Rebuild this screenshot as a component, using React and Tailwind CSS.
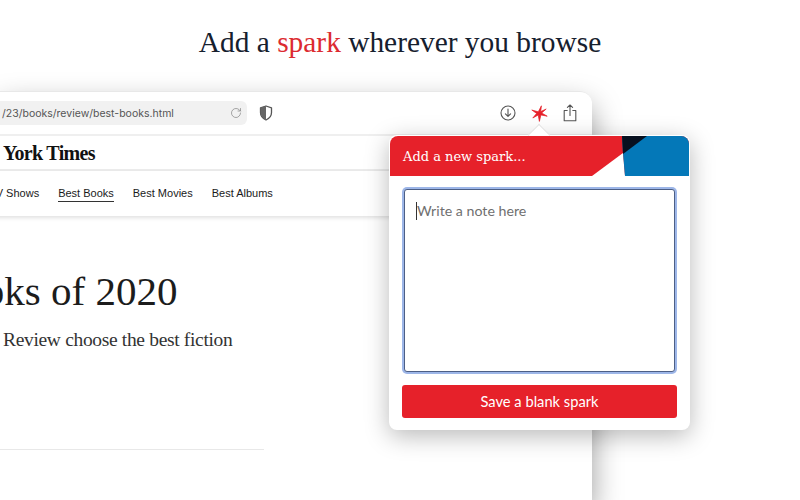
import React from "react";
import { RotateCw } from "lucide-react";

const serif = "font-['Liberation_Serif',serif]";

function Shield() {
  return (
    <svg width="14" height="16" viewBox="0 0 14 16" fill="none">
      <path d="M7 1 L12.5 2.8 V7.5 C12.5 11 10 13.6 7 15 C4 13.6 1.5 11 1.5 7.5 V2.8 Z" fill="#fff" stroke="#555" strokeWidth="1.3" strokeLinejoin="round" />
      <path d="M7 1 L1.5 2.8 V7.5 C1.5 11 4 13.6 7 15 Z" fill="#666" />
    </svg>
  );
}

function Download() {
  return (
    <svg width="16" height="16" viewBox="0 0 16 16" fill="none" stroke="#555" strokeWidth="1.1" strokeLinecap="round" strokeLinejoin="round">
      <circle cx="8" cy="8" r="7" />
      <path d="M8 4 V11.2 M5.4 8.8 L8 11.4 L10.6 8.8" />
    </svg>
  );
}

function Spark() {
  return (
    <svg width="17" height="17" viewBox="0 0 17 17" fill="#e6212a" stroke="#e6212a" strokeWidth="0.7" strokeLinejoin="round">
      <path d="M10.4 0.8 L9.7 6.6 L15.2 4 L10.7 8 L16.2 11.2 L9.9 9.9 L8.4 16.4 L7.2 10 L1.8 13 L5.6 8.4 L0.8 5 L7.3 6.8 Z" />
    </svg>
  );
}

function Share() {
  return (
    <svg width="14" height="18" viewBox="0 0 14 18" fill="none" stroke="#555" strokeWidth="1.1" strokeLinecap="round" strokeLinejoin="round">
      <path d="M4.2 6.5 H1.2 V16.8 H12.8 V6.5 H9.8" />
      <path d="M7 11.5 V1 M4.4 3.4 L7 1 L9.6 3.4" />
    </svg>
  );
}

function Popup() {
  return (
    <div className="absolute left-[389px] top-[135px] w-[301px] h-[295px] rounded-lg bg-white shadow-[0_6px_24px_rgba(0,0,0,0.28)] flex flex-col">
      <div className="absolute left-[142px] top-[-8px] w-4 h-4 rotate-45 bg-white border-l border-t border-[#e2e2e2]" />
      <div className="relative h-10 mt-px mx-px rounded-t-lg overflow-hidden bg-[#e6212a] flex items-center pl-[13px]">
        <span className="relative text-white text-[13px] font-['DejaVu_Serif',serif] leading-none pt-[1px]">Add a new spark...</span>
        <svg className="absolute inset-0" width="299" height="40" viewBox="0 0 299 40">
          <polygon points="202,40 233,17 235,40" fill="#fff" />
          <polygon points="233,17 232,0 299,0 299,40 235,40" fill="#0478b8" />
          <polygon points="232,0 257,0 233,18" fill="#07101f" />
        </svg>
      </div>
      <div className="flex-1 flex flex-col px-[13px] pt-[13px] pb-3">
        <div className="mx-[2px] h-[183px] rounded-[3px] border border-[#4d5f85] shadow-[0_0_0_2px_#9db6e8] bg-white px-[11px] pt-[11px]">
          <div className="flex items-center h-[20px] font-['Lato',sans-serif] text-[14.2px] text-[#6f6f6f] leading-none">
            <span className="w-px h-[18px] bg-[#333]" />
            <span>Write a note here</span>
          </div>
        </div>
        <div className="mt-[13px] h-[33px] rounded-[3px] bg-[#e6212a] flex items-center justify-center text-white text-[14.7px] font-['Lato',sans-serif]">
          Save a blank spark
        </div>
      </div>
    </div>
  );
}

export default function App() {
  return (
    <div className="relative w-[800px] h-[500px] overflow-hidden bg-white">
      <div className={`h-[91px] pb-[7px] flex items-center justify-center text-[29.4px] text-[#16202e] ${serif}`}>
        <span>Add a <span className="text-[#dc2a30]">spark</span> wherever you browse</span>
      </div>

      <div className="w-[592px] h-[409px] rounded-tr-xl bg-white shadow-[0_14px_30px_rgba(0,0,0,0.4)] flex flex-col">
        <div className="h-[45px] shrink-0 flex items-center border-b-2 border-[#efefef] rounded-tr-xl border-t border-t-[#e8e8e8]">
          <div className="w-[247px] h-6 rounded-r-md bg-[#f1f1f1] flex items-center justify-between pr-[5px] pl-[2px]">
            <span className="font-['Inter',sans-serif] text-[10.5px] text-[#555] whitespace-nowrap pt-[2px]">/23/books/review/best-books.html</span>
            <RotateCw size={12} color="#8a8a8a" strokeWidth={1.5} />
          </div>
          <div className="ml-3 flex"><Shield /></div>
          <div className="ml-auto flex items-center pr-[15px]">
            <Download />
            <div className="ml-[15px] flex"><Spark /></div>
            <div className="ml-[15px] flex"><Share /></div>
          </div>
        </div>

        <div className="h-[35px] shrink-0 flex items-center border-b-2 border-[#ececec] pl-[3px]">
          <span className={`text-[20px] font-bold text-[#111] leading-none tracking-[-0.7px] pt-[1px] ${serif}`}>York Times</span>
        </div>

        <div className="h-[45px] shrink-0 flex items-center gap-[19px] -ml-[11px] shadow-[0_2px_4px_rgba(0,0,0,0.12)] font-['Liberation_Sans',sans-serif] text-[11px] text-[#1a1a1a]">
          <span>TV Shows</span>
          <span className="border-b border-[#333] leading-[15px] mt-[1px]">Best Books</span>
          <span>Best Movies</span>
          <span>Best Albums</span>
        </div>

        <div className={`overflow-hidden ${serif}`}>
          <div className="-ml-[64px] mt-[50px] text-[41px] leading-[50px] text-[#1c1c1c] whitespace-nowrap">Books of 2020</div>
          <div className="ml-[3px] mt-[11px] text-[19.5px] leading-[26px] text-[#333] whitespace-nowrap tracking-[-0.33px]">Review choose the best fiction</div>
        </div>
        <div className="mt-[96px] w-[264px] border-t border-[#e8e8e8]" />
      </div>

      <Popup />
    </div>
  );
}
